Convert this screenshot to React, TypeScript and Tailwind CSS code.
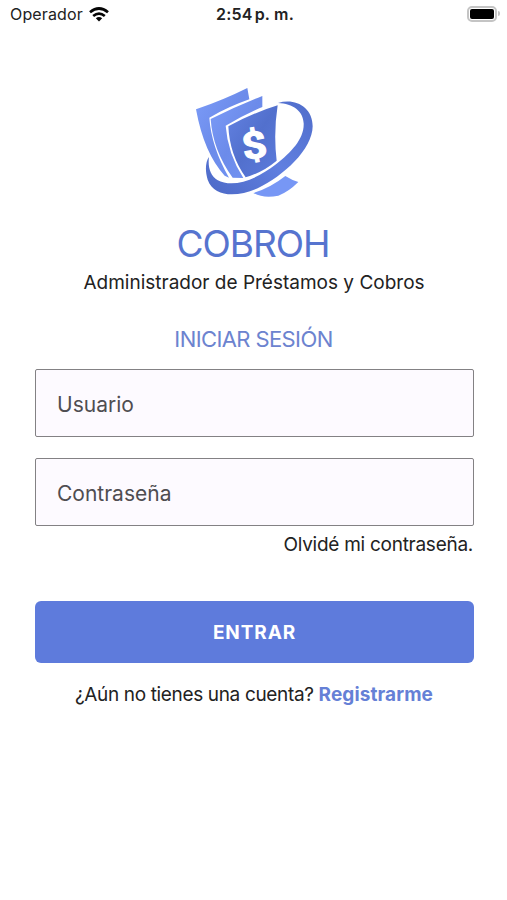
import { useState } from "react";

function Logo() {
  return (
    <svg viewBox="0 0 450 405" className="h-[135px] w-[150px]" role="img" aria-label="COBROH">
      <defs>
        <linearGradient id="bill" x1="0" y1="0" x2="1" y2="1">
          <stop offset="0" stopColor="#7c9cf8" />
          <stop offset="0.5" stopColor="#6c8bea" />
          <stop offset="1" stopColor="#7395f5" />
        </linearGradient>
        <linearGradient id="front" x1="0" y1="0" x2="1" y2="1">
          <stop offset="0" stopColor="#6382e2" />
          <stop offset="0.5" stopColor="#5270cd" />
          <stop offset="1" stopColor="#5c7bdc" />
        </linearGradient>
        <linearGradient id="ring" x1="0" y1="1" x2="1" y2="0">
          <stop offset="0" stopColor="#4c69c6" />
          <stop offset="0.5" stopColor="#607fe0" />
          <stop offset="1" stopColor="#506dca" />
        </linearGradient>
      </defs>
      {/* back bills */}
      <path d="M48 103 Q130 75 202 39 L208 73 Q145 95 88 128 Q94 215 147 308 L134 302 Q72 235 48 103Z" fill="url(#bill)" />
      <path d="M92 132 Q165 95 247 63 L247 96 Q190 120 137 152 Q143 235 190 309 L158 308 Q98 225 92 132Z" fill="url(#bill)" />
      {/* front bill */}
      <path d="M145 154 Q215 115 293 91 Q280 175 290 257 Q248 292 197 307 Q149 240 145 154Z" fill="url(#front)" />
      <path d="M220 354 Q272 338 316 303 Q335 315 355 321 Q325 351 295 362 Q250 371 220 354Z" fill="#7797f5" />
      {/* ring */}
      <path d="M294 84 C345 68 398 96 398 154 C397 224 310 303 233 340 C174 366 103 369 83 314 C75 289 76 260 87 246 C83 276 91 302 112 315 C158 340 226 316 288 268 C335 231 373 190 371 145 C370 108 339 86 294 84Z" fill="url(#ring)" />
      <text
        x="0"
        y="39"
        textAnchor="middle"
        fill="#fff"
        stroke="#fff"
        strokeWidth="3"
        transform="translate(223 211) rotate(-10) scale(1.16 1)"
        className="font-['Roboto',sans-serif] text-[112px] font-bold"
      >
        $
      </text>
    </svg>
  );
}

function StatusBar() {
  return (
    <div className="grid h-7 grid-cols-3 items-center pl-[10px] pr-[7px] text-[16px] text-[#222]">
      <div className="flex items-center gap-[6px]">
        <span className="tracking-[0.15px]">Operador</span>
        <svg viewBox="0 0 20 15" className="h-[15px] w-5" fill="none" stroke="#050505" strokeWidth="2.7">
          <path d="M1 5.3 Q10 -2.3 19 5.3" />
          <path d="M4.2 9 Q10 4.2 15.8 9" />
          <path d="M6.8 11.2 Q10 8.7 13.2 11.2 L10 14.5Z" fill="#050505" stroke="none" />
        </svg>
      </div>
      <span className="whitespace-nowrap text-center font-semibold tracking-[0.2px]">
        2:54<span className="ml-[2px]">p. m.</span>
      </span>
      <div className="flex items-center justify-end gap-px pb-px">
        <div className="h-4 w-[30px] rounded-[5px] border-2 border-[#c4c4c4] p-px">
          <div className="h-full w-full rounded-[2px] bg-black" />
        </div>
        <div className="h-[5px] w-[2px] rounded-r-full bg-[#c4c4c4]" />
      </div>
    </div>
  );
}

const fieldClass =
  "block h-[68px] w-full rounded-[2px] border border-[#838184] bg-[#fdfaff] px-[21px] pt-[2px] text-[21px] text-[#4a484c] outline-none placeholder:text-[#4f4d51] placeholder:opacity-100";

export default function App() {
  const [user, setUser] = useState("");
  const [password, setPassword] = useState("");

  return (
    <div className="min-h-[900px] w-[507px] bg-white font-['Inter','Liberation_Sans',sans-serif] text-[#222]">
      <StatusBar />
      <main className="flex flex-col pl-[35px] pr-[33px] pt-[47px]">
        <div className="flex justify-center">
          <Logo />
        </div>
        <h1 className="mt-[12px] pr-[3px] text-center text-[37px] leading-[44px] font-normal tracking-[-1px] text-[#5674cf]">COBROH</h1>
        <p className="mt-[5px] pr-px text-center text-[19px] leading-[24px]">Administrador de Préstamos y Cobros</p>
        <h2 className="mt-[30px] pr-[2px] text-center text-[22px] leading-[28px] tracking-[-0.6px] text-[#6c83cf]">INICIAR SESIÓN</h2>

        <form onSubmit={(e) => e.preventDefault()}>
          <div className="mt-[16px] flex flex-col gap-[21px]">
            <input
              className={fieldClass}
              placeholder="Usuario"
              value={user}
              onChange={(e) => setUser(e.target.value)}
            />
            <input
              type="password"
              className={fieldClass}
              placeholder="Contraseña"
              value={password}
              onChange={(e) => setPassword(e.target.value)}
            />
          </div>
          <a href="#" className="mt-[7px] block pr-px text-right text-[19px] leading-[24px] tracking-[-0.27px]">
            Olvidé mi contraseña.
          </a>
          <button className="mt-[44px] block h-[62px] w-full rounded-[6px] bg-[#5e7bdc] pt-[2px] text-[19px] font-bold tracking-[0.9px] text-white">
            ENTRAR
          </button>
        </form>

        <p className="mt-[20px] pr-px text-center text-[19px] leading-[24px] tracking-[-0.35px]">
          ¿Aún no tienes una cuenta?{" "}
          <a href="#" className="font-bold tracking-[0.1px] text-[#6580d6]">Registrarme</a>
        </p>
      </main>
    </div>
  );
}
